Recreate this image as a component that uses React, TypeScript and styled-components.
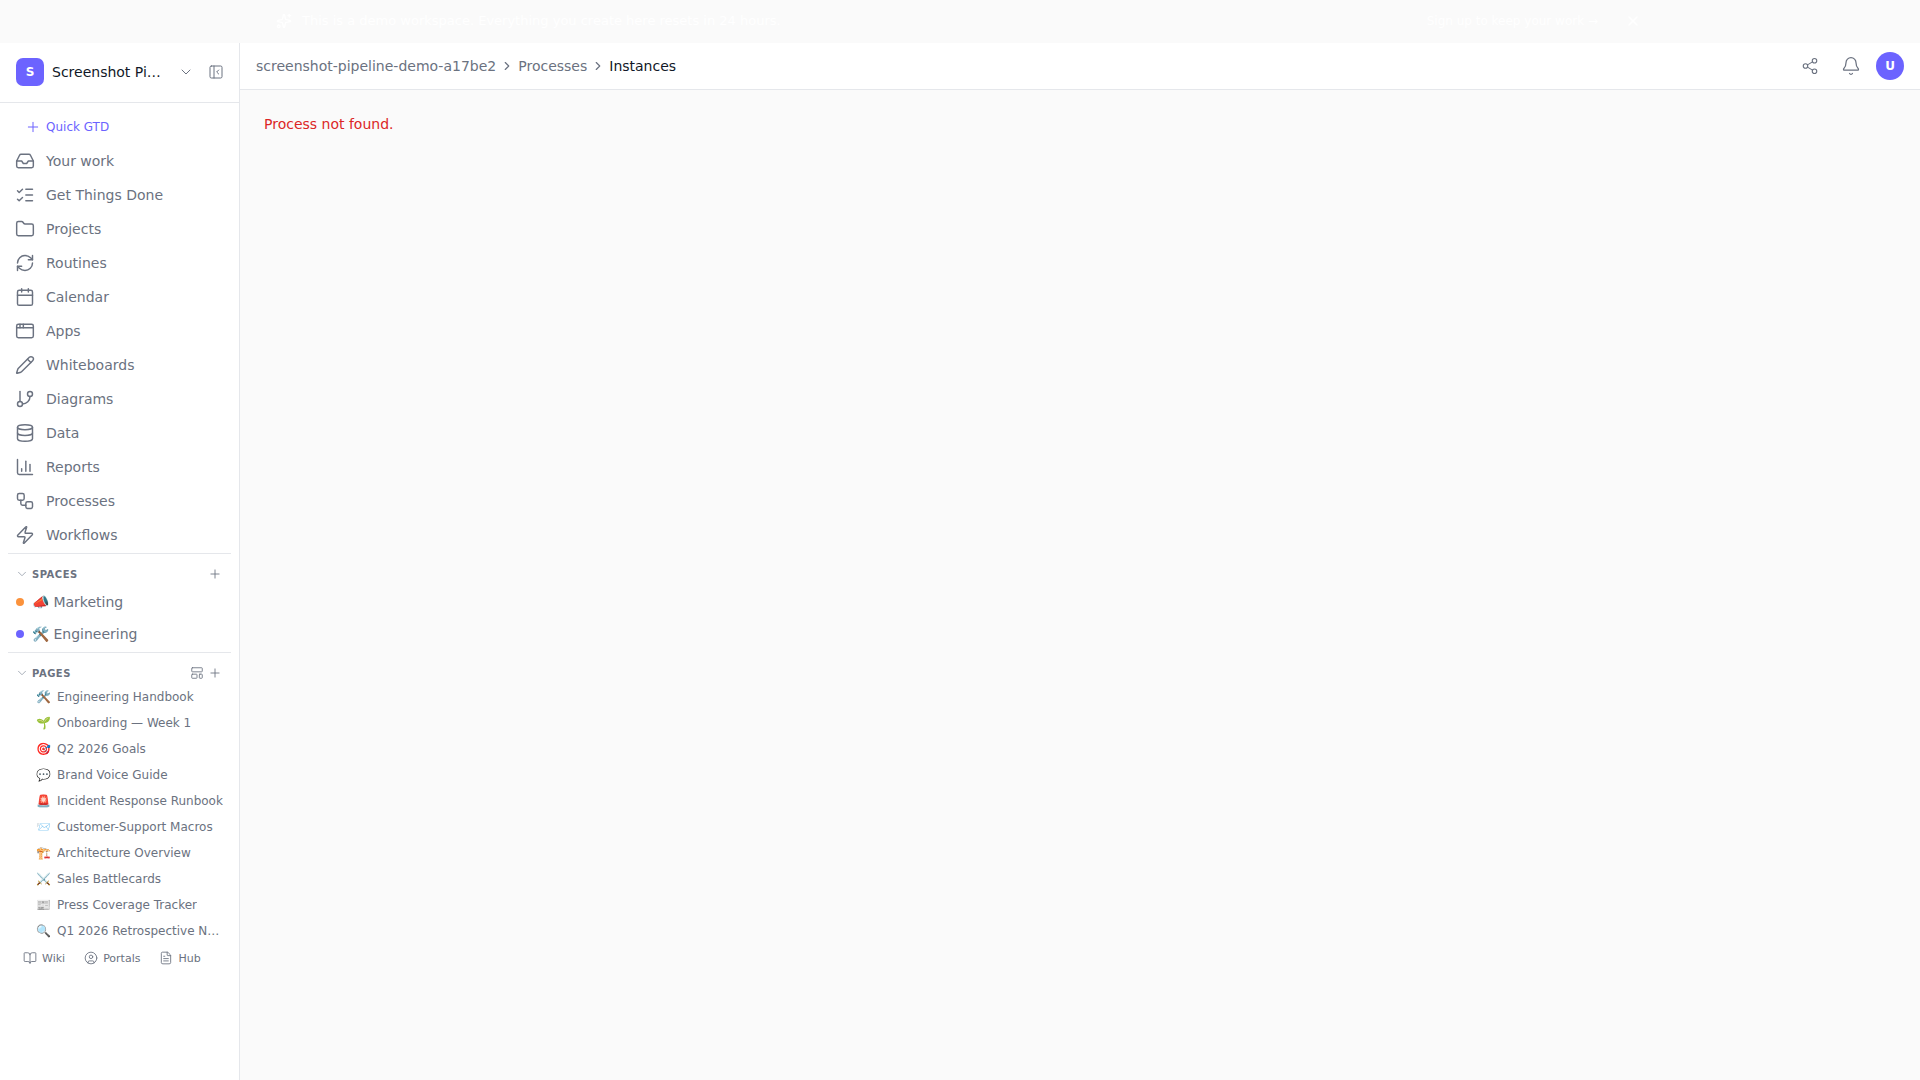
import React from 'react'
import styled, { createGlobalStyle } from 'styled-components'
import {
  BarChart3, BookOpen, Bell, Calendar, ChevronDown, ChevronRight, CircleUser, Database, FileText, Folder, GitBranch,
  Inbox, LayoutTemplate, ListChecks, PanelLeftClose, Pencil, Plus, RefreshCw, Share2, Sparkles, Workflow, X, Zap, AppWindow,
} from 'lucide-react'

const GlobalStyle = createGlobalStyle`
  html, body { margin: 0; padding: 0; height: 100%; }
  body { font-family: "DejaVu Sans", sans-serif; background: #fafafa; }
  #root { height: 100%; }
  * { box-sizing: border-box; }
`

const Shell = styled.div`
  display: flex;
  flex-direction: column;
  height: 100vh;
  overflow: hidden;
`

const Banner = styled.div`
  height: 43px;
  flex: none;
  background: #fafafa;
  color: #ffffff;
  font-size: 13px;
  display: flex;
  align-items: center;
  justify-content: space-between;
  padding: 0 279px 2px 276px;
`

const BannerGroup = styled.div<{ $gap: number }>`
  display: flex;
  align-items: center;
  gap: ${p => p.$gap}px;
`

const BannerLink = styled.span`
  font-size: 12px;
`

const Body = styled.div`
  flex: 1;
  display: flex;
  min-height: 0;
`

const Sidebar = styled.aside`
  width: 240px;
  flex: none;
  background: #ffffff;
  border-right: 1px solid #e5e7eb;
  display: flex;
  flex-direction: column;
`

const WorkspaceHeader = styled.div`
  height: 60px;
  flex: none;
  display: flex;
  align-items: center;
  padding: 15px 15px 16px 16px;
  border-bottom: 1px solid #e5e7eb;
  color: #6b7280;
`

const WorkspaceBadge = styled.div`
  width: 28px;
  height: 28px;
  border-radius: 7px;
  background: #6c63ff;
  color: #ffffff;
  font-size: 12px;
  font-weight: 700;
  display: flex;
  align-items: center;
  justify-content: center;
`

const WorkspaceName = styled.span`
  font-size: 14px;
  color: #111827;
  margin-left: 8px;
  width: 109px;
  white-space: nowrap;
  overflow: hidden;
  text-overflow: ellipsis;
`

const WorkspaceActions = styled.div`
  margin-left: auto;
  display: flex;
  align-items: center;
  gap: 14px;
  svg { stroke-width: 1.5; }
`

const SideScroll = styled.div`
  flex: 1;
  padding: 8px 8px 0;
  display: flex;
  flex-direction: column;
`

const QuickButton = styled.div`
  height: 32px;
  margin-bottom: 1px;
  display: flex;
  align-items: center;
  gap: 5px;
  padding-left: 17px;
  font-size: 12px;
  color: #6c63ff;
  svg { stroke-width: 1.5; }
`

const NavItem = styled.div`
  height: 34px;
  display: flex;
  align-items: center;
  gap: 11px;
  padding-left: 7px;
  font-size: 14px;
  color: #6b7280;
  svg { stroke-width: 1.75; }
`

const Divider = styled.div`
  height: 1px;
  background: #e5e7eb;
  margin-top: 1px;
`

const SectionHead = styled.div`
  height: 20px;
  margin-top: 10px;
  display: flex;
  align-items: center;
  padding: 0 9px 0 7px;
  color: #6b7280;
  svg { stroke-width: 1.5; }
`

const SectionChevron = styled(ChevronDown)`
  color: #9ca3af;
`

const SectionTitle = styled.span`
  font-size: 10px;
  font-weight: 700;
  letter-spacing: 0.5px;
  margin-left: 3px;
  flex: 1;
`

const SectionTools = styled.div`
  display: flex;
  align-items: center;
  gap: 4px;
`

const SpaceList = styled.div`
  margin-top: 2px;
  margin-bottom: 1px;
`

const SpaceRow = styled.div`
  height: 32px;
  display: flex;
  align-items: center;
  gap: 8px;
  padding-left: 8px;
  font-size: 14px;
  color: #6b7280;
`

const Dot = styled.span<{ $color: string }>`
  width: 8px;
  height: 8px;
  border-radius: 50%;
  background: ${p => p.$color};
`

const PageList = styled.div`
  margin-top: 1px;
`

const PageRow = styled.div`
  height: 26px;
  display: flex;
  align-items: center;
  padding-left: 28px;
  font-size: 12px;
  color: #6b7280;
  white-space: nowrap;
`

const PageEmoji = styled.span`
  width: 21px;
  flex: none;
`

const PageName = styled.span`
  overflow: hidden;
  text-overflow: ellipsis;
  max-width: 167px;
`

const FootLinks = styled.div`
  display: flex;
  align-items: center;
  gap: 19px;
  padding: 7px 0 0 15px;
`

const FootLink = styled.span`
  display: flex;
  align-items: center;
  gap: 5px;
  font-size: 11px;
  color: #6b7280;
  svg { stroke-width: 1.5; }
`

const Main = styled.main`
  flex: 1;
  min-width: 0;
  display: flex;
  flex-direction: column;
`

const TopBar = styled.header`
  height: 47px;
  flex: none;
  background: #ffffff;
  border-bottom: 1px solid #e5e7eb;
  display: flex;
  align-items: center;
  padding: 9px 16px 9px;
`

const Crumbs = styled.nav`
  display: flex;
  align-items: center;
  gap: 4px;
  font-size: 14px;
  color: #6b7280;
`

const CurrentCrumb = styled.span`
  color: #111827;
`

const TopActions = styled.div`
  margin-left: auto;
  display: flex;
  align-items: center;
  color: #6b7280;
  gap: 5px;
`

const IconButton = styled.div`
  width: 36px;
  height: 28px;
  display: flex;
  align-items: center;
  justify-content: center;
  svg { stroke-width: 1.5; }
`

const Avatar = styled.div`
  width: 28px;
  height: 28px;
  border-radius: 50%;
  background: #6c63ff;
  color: #ffffff;
  font-size: 12px;
  font-weight: 700;
  display: flex;
  align-items: center;
  justify-content: center;
  margin-left: 2px;
`

const Content = styled.div`
  flex: 1;
  padding: 24px;
`

const ErrorText = styled.p`
  margin: 0;
  font-size: 14px;
  line-height: 20px;
  color: #dc2626;
`

const navItems = [
  { label: 'Your work', icon: Inbox },
  { label: 'Get Things Done', icon: ListChecks },
  { label: 'Projects', icon: Folder },
  { label: 'Routines', icon: RefreshCw },
  { label: 'Calendar', icon: Calendar },
  { label: 'Apps', icon: AppWindow },
  { label: 'Whiteboards', icon: Pencil },
  { label: 'Diagrams', icon: GitBranch },
  { label: 'Data', icon: Database },
  { label: 'Reports', icon: BarChart3 },
  { label: 'Processes', icon: Workflow },
  { label: 'Workflows', icon: Zap },
]

const pages = [
  ['🛠️', 'Engineering Handbook'],
  ['🌱', 'Onboarding — Week 1'],
  ['🎯', 'Q2 2026 Goals'],
  ['💬', 'Brand Voice Guide'],
  ['🚨', 'Incident Response Runbook'],
  ['📨', 'Customer-Support Macros'],
  ['🏗️', 'Architecture Overview'],
  ['⚔️', 'Sales Battlecards'],
  ['📰', 'Press Coverage Tracker'],
  ['🔍', 'Q1 2026 Retrospective Notes'],
]

const App = () => {
  return (
    <Shell>
      <GlobalStyle />
      <Banner>
        <BannerGroup $gap={10}>
          <Sparkles size={16} />
          <span>This is a demo workspace. Everything you create here resets in 24 hours.</span>
        </BannerGroup>
        <BannerGroup $gap={27}>
          <BannerLink>Sign up to keep your work →</BannerLink>
          <X size={16} />
        </BannerGroup>
      </Banner>
      <Body>
        <Sidebar>
          <WorkspaceHeader>
            <WorkspaceBadge>S</WorkspaceBadge>
            <WorkspaceName>Screenshot Pipeline</WorkspaceName>
            <WorkspaceActions>
              <ChevronDown size={16} />
              <PanelLeftClose size={16} />
            </WorkspaceActions>
          </WorkspaceHeader>
          <SideScroll>
            <QuickButton><Plus size={16} />Quick GTD</QuickButton>
            {navItems.map(({ label, icon: Icon }) => (
              <NavItem key={label}><Icon size={20} />{label}</NavItem>
            ))}
            <Divider />
            <SectionHead>
              <SectionChevron size={14} />
              <SectionTitle>SPACES</SectionTitle>
              <Plus size={14} />
            </SectionHead>
            <SpaceList>
              <SpaceRow><Dot $color="#fb923c" />📣 Marketing</SpaceRow>
              <SpaceRow><Dot $color="#6c63ff" />🛠️ Engineering</SpaceRow>
            </SpaceList>
            <Divider />
            <SectionHead>
              <SectionChevron size={14} />
              <SectionTitle>PAGES</SectionTitle>
              <SectionTools>
                <LayoutTemplate size={14} />
                <Plus size={14} />
              </SectionTools>
            </SectionHead>
            <PageList>
              {pages.map(([emoji, name]) => (
                <PageRow key={name}><PageEmoji>{emoji}</PageEmoji><PageName>{name}</PageName></PageRow>
              ))}
            </PageList>
            <FootLinks>
              <FootLink><BookOpen size={14} />Wiki</FootLink>
              <FootLink><CircleUser size={14} />Portals</FootLink>
              <FootLink><FileText size={14} />Hub</FootLink>
            </FootLinks>
          </SideScroll>
        </Sidebar>
        <Main>
          <TopBar>
            <Crumbs>
              screenshot-pipeline-demo-a17be2
              <ChevronRight size={14} />
              Processes
              <ChevronRight size={14} />
              <CurrentCrumb>Instances</CurrentCrumb>
            </Crumbs>
            <TopActions>
              <IconButton><Share2 size={18} /></IconButton>
              <IconButton><Bell size={20} /></IconButton>
              <Avatar>U</Avatar>
            </TopActions>
          </TopBar>
          <Content>
            <ErrorText>Process not found.</ErrorText>
          </Content>
        </Main>
      </Body>
    </Shell>
  )
}

export default App
